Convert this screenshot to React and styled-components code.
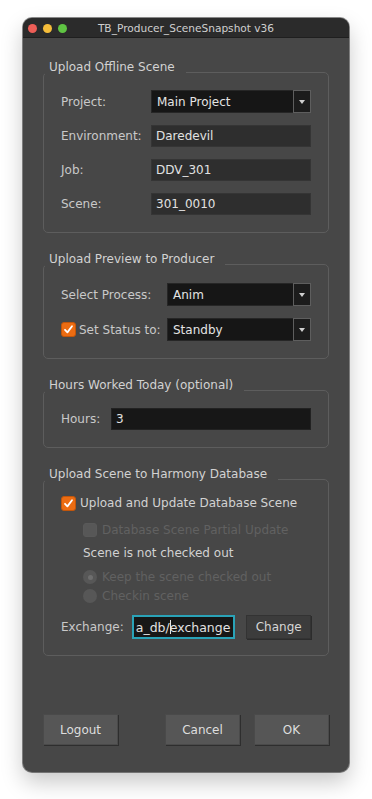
import React from "react"
import styled, { createGlobalStyle } from "styled-components"

const GlobalStyle = createGlobalStyle`
  html, body { margin: 0; padding: 0; background: #ffffff; }
  body { font-family: "DejaVu Sans", "Liberation Sans", sans-serif; }
`

const Page = styled.div`
  width: 372px;
  height: 799px;
  padding: 18px 0 0 23px;
  box-sizing: border-box;
`

const Window = styled.div`
  width: 326px;
  height: 754px;
  border-radius: 9px;
  background: #474747;
  overflow: hidden;
  display: flex;
  flex-direction: column;
  box-shadow: 0 0 0 1px rgba(0, 0, 0, 0.45), 0 10px 22px rgba(0, 0, 0, 0.22);
`

const TitleBar = styled.div`
  height: 19px;
  flex: none;
  background: #2b2b2b;
  border-bottom: 1px solid #1f1f1f;
  display: grid;
  grid-template-columns: 1fr auto 1fr;
  align-items: center;
`

const Lights = styled.div`
  display: flex;
  gap: 6px;
  padding-left: 5px;
  padding-top: 1px;
`

const Light = styled.span`
  width: 9px;
  height: 9px;
  border-radius: 50%;
  background: ${p => p.$color};
`

const WindowTitle = styled.div`
  font-size: 10.6px;
  color: #cfcfcf;
`

const Body = styled.div`
  flex: 1;
  display: flex;
  flex-direction: column;
  padding: 21.5px 20px 27px;
`

const Group = styled.fieldset`
  margin: 0 0 18.5px;
  padding: ${p => p.$top || 4.5}px 17px ${p => p.$bottom || 17}px;
  border: 1px solid #5d5d5d;
  border-radius: 5px;
  min-inline-size: 0;
`

const GroupTitle = styled.legend`
  margin-left: -16px;
  padding: 0 11px 12px 4px;
  font-size: 12px;
  line-height: 14px;
  color: #d2d2d2;
`

const FormGrid = styled.div`
  display: grid;
  grid-template-columns: ${p => p.$labelWidth}px 1fr;
  row-gap: 12px;
  align-items: center;
`

const Label = styled.div`
  font-size: 12px;
  color: #c9c9c9;
  white-space: nowrap;
  display: flex;
  align-items: center;
  gap: 3px;
  width: ${p => (p.$width ? `${p.$width}px` : "auto")};
  flex: none;
`

const TextField = styled.div`
  height: 22px;
  box-sizing: border-box;
  padding: 0 4px;
  display: flex;
  align-items: center;
  font-size: 12px;
  color: #e2e2e2;
  background: ${p => (p.$dark ? "#171717" : "#2e2e2e")};
  border: 1px solid ${p => (p.$dark ? "#222" : "#353535")};
  overflow: hidden;
  white-space: nowrap;
`

const Combo = styled.div`
  display: flex;
  height: 23px;
`

const ComboValue = styled.div`
  flex: 1;
  display: flex;
  align-items: center;
  padding: 0 5px;
  font-size: 12px;
  color: #e4e4e4;
  background: #161616;
  border: 1px solid #262626;
  border-right: none;
`

const ComboButton = styled.div`
  width: 18px;
  box-sizing: border-box;
  background: #1c1c1c;
  border: 1px solid #5e5e5e;
  display: flex;
  align-items: center;
  justify-content: center;
`

const Arrow = styled.span`
  width: 0;
  height: 0;
  border-left: 3.5px solid transparent;
  border-right: 3.5px solid transparent;
  border-top: 4px solid #cfcfcf;
`

const Check = styled.span`
  width: ${p => (p.$disabled ? 14 : 15)}px;
  height: ${p => (p.$disabled ? 14 : 15)}px;
  box-sizing: border-box;
  border-radius: 3px;
  flex: none;
  background: ${p => (p.$disabled ? "#575757" : "#ec6c12")};
  border: 1px solid ${p => (p.$disabled ? "#595959" : "#c2560b")};
  display: flex;
  align-items: center;
  justify-content: center;
`

const Radio = styled.span`
  width: 14px;
  height: 14px;
  border-radius: 50%;
  flex: none;
  background: #575757;
  display: flex;
  align-items: center;
  justify-content: center;
  &::after {
    content: "";
    width: 5px;
    height: 5px;
    border-radius: 50%;
    background: ${p => (p.$on ? "#6e6e6e" : "transparent")};
  }
`

const Stack = styled.div`
  display: flex;
  flex-direction: column;
`

const Row = styled.div`
  display: flex;
  align-items: center;
  gap: ${p => (p.$gap === undefined ? 5 : p.$gap)}px;
  height: ${p => p.$h || 16}px;
  margin-top: ${p => p.$top || 0}px;
  padding-left: ${p => p.$indent || 0}px;
  font-size: 12px;
  color: ${p => (p.$disabled ? "#616161" : "#d2d2d2")};
  white-space: nowrap;
`

const ExchangeField = styled.div`
  width: 104px;
  height: 24px;
  box-sizing: border-box;
  background: #171717;
  border: 2px solid #2aa3b8;
  display: flex;
  align-items: center;
  justify-content: flex-end;
  overflow: hidden;
  font-size: 12.5px;
  color: #e2e2e2;
  white-space: nowrap;
  padding-right: 3px;
`

const Caret = styled.span`
  display: inline-block;
  width: 1px;
  height: 14px;
  background: #e2e2e2;
  margin-right: -1px;
  flex: none;
`

const SmallButton = styled.div`
  width: 65px;
  height: 24px;
  margin-left: 11px;
  box-sizing: border-box;
  background: #3c3c3c;
  border: 1px solid #333;
  box-shadow: 1px 1px 0 #2c2c2c;
  display: flex;
  align-items: center;
  justify-content: center;
  font-size: 12px;
  color: #d6d6d6;
`

const Footer = styled.div`
  margin-top: auto;
  display: flex;
  gap: 14px;
`

const Button = styled.div`
  width: 75px;
  height: 31px;
  box-sizing: border-box;
  background: #565656;
  border: 1px solid #4a4a4a;
  box-shadow: 1px 1px 0 #2e2e2e;
  display: flex;
  align-items: center;
  justify-content: center;
  font-size: 12px;
  color: #dedede;
  margin-right: ${p => (p.$push ? "auto" : "0")};
`

const CheckMark = () => (
  <svg width="11" height="11" viewBox="0 0 11 11">
    <path d="M2 5.8 L4.4 8.4 L9 2.2" fill="none" stroke="#fff" strokeWidth="1.8" strokeLinecap="round" strokeLinejoin="round" />
  </svg>
)

const ComboBox = ({ value }) => (
  <Combo>
    <ComboValue>{value}</ComboValue>
    <ComboButton><Arrow /></ComboButton>
  </Combo>
)

export default function App() {
  return (
    <Page>
      <GlobalStyle />
      <Window>
        <TitleBar>
          <Lights>
            <Light $color="#ee5e57" />
            <Light $color="#f5bd3a" />
            <Light $color="#5fc443" />
          </Lights>
          <WindowTitle>TB_Producer_SceneSnapshot v36</WindowTitle>
          <div />
        </TitleBar>

        <Body>
          <Group>
            <GroupTitle>Upload Offline Scene</GroupTitle>
            <FormGrid $labelWidth={90}>
              <Label>Project:</Label>
              <ComboBox value="Main Project" />
              <Label>Environment:</Label>
              <TextField>Daredevil</TextField>
              <Label>Job:</Label>
              <TextField>DDV_301</TextField>
              <Label>Scene:</Label>
              <TextField>301_0010</TextField>
            </FormGrid>
          </Group>

          <Group $top={5.5}>
            <GroupTitle>Upload Preview to Producer</GroupTitle>
            <FormGrid $labelWidth={106}>
              <Label>Select Process:</Label>
              <ComboBox value="Anim" />
              <Label>
                <Check><CheckMark /></Check>
                Set Status to:
              </Label>
              <ComboBox value="Standby" />
            </FormGrid>
          </Group>

          <Group>
            <GroupTitle>Hours Worked Today (optional)</GroupTitle>
            <FormGrid $labelWidth={50}>
              <Label>Hours:</Label>
              <TextField $dark>3</TextField>
            </FormGrid>
          </Group>

          <Group $top={2.5} $bottom={16}>
            <GroupTitle>Upload Scene to Harmony Database</GroupTitle>
            <Stack>
              <Row $gap={4}>
                <Check><CheckMark /></Check>
                Upload and Update Database Scene
              </Row>
              <Row $top={11} $indent={22} $disabled>
                <Check $disabled />
                Database Scene Partial Update
              </Row>
              <Row $top={7} $indent={22}>Scene is not checked out</Row>
              <Row $top={8} $indent={22} $disabled>
                <Radio $on />
                Keep the scene checked out
              </Row>
              <Row $top={3} $indent={22} $disabled>
                <Radio />
                Checkin scene
              </Row>
              <Row $top={11} $h={24} $gap={0}>
                <Label $width={71}>Exchange:</Label>
                <ExchangeField>
                  <span>a_db/</span><Caret /><span>exchange</span>
                </ExchangeField>
                <SmallButton>Change</SmallButton>
              </Row>
            </Stack>
          </Group>

          <Footer>
            <Button $push>Logout</Button>
            <Button>Cancel</Button>
            <Button>OK</Button>
          </Footer>
        </Body>
      </Window>
    </Page>
  )
}
